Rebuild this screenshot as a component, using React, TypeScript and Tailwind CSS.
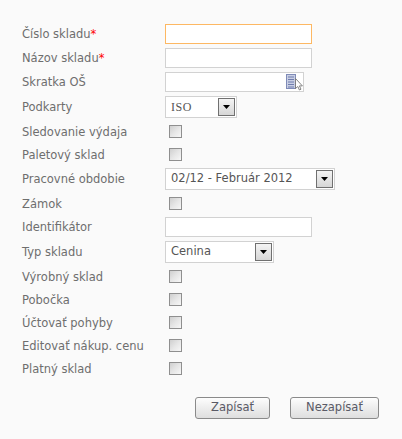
const font = "font-['DejaVu_Sans',sans-serif]";

function Label({ text, required }: { text: string; required?: boolean }) {
  return (
    <label className="w-[143px] shrink-0 text-[11.5px] leading-[14px] text-[#6e6e6e] whitespace-nowrap">
      {text}
      {required && <span className="text-[#f00]">*</span>}
    </label>
  );
}

function TextBox({ width, focused }: { width: string; focused?: boolean }) {
  return (
    <input
      type="text"
      className={`${width} h-5 bg-white border outline-none ${focused ? "border-[#fdb863]" : "border-[#d2d2d2]"}`}
    />
  );
}

function Check() {
  return (
    <span className="ml-1 block w-[13px] h-[13px] border border-[#8f8f8f] bg-gradient-to-br from-[#cfcfcf] via-[#e6e6e6] to-[#f7f7f7]" />
  );
}

function Select({ value, width, mono }: { value: string; width: string; mono?: boolean }) {
  return (
    <div className={`${width} h-[22px] bg-white border border-[#d2d2d2] flex items-center justify-between pl-[5px] pr-[1px]`}>
      <span className={`text-[11.5px] text-[#555] ${mono ? "font-['Liberation_Serif',serif] text-[12px] tracking-[0.5px]" : ""}`}>{value}</span>
      <span className="w-[17px] h-[18px] border border-[#707070] bg-gradient-to-b from-[#f4f4f4] to-[#d6d6d6] flex items-center justify-center">
        <svg width="7" height="4" viewBox="0 0 7 4">
          <path d="M0 0h7L3.5 4z" fill="#000" />
        </svg>
      </span>
    </div>
  );
}

function PickerIcon() {
  return (
    <svg className="absolute right-0 top-[2px]" width="18" height="17" viewBox="0 0 18 17">
      <rect x="0.5" y="0.5" width="9" height="14" fill="#c9cfe4" stroke="#7f8bb8" />
      <path d="M2 3h6M2 5.5h6M2 8h6M2 10.5h6M2 13h6" stroke="#6f7cae" />
      <path d="M9.5 4.5v10l2.3-2 1.6 3.5 1.6-.8-1.6-3.3h3z" fill="#fff" stroke="#777" strokeWidth="0.9" />
    </svg>
  );
}

function Row({ label, required, h, children }: { label: string; required?: boolean; h: string; children: React.ReactNode }) {
  return (
    <div className={`flex items-center ${h}`}>
      <Label text={label} required={required} />
      {children}
    </div>
  );
}

export default function App() {
  return (
    <div className={`w-[402px] h-[439px] bg-[#fafafa] pt-[22px] pl-[22px] ${font}`}>
      <Row label="Číslo skladu" required h="h-6"><TextBox width="w-[147px]" focused /></Row>
      <Row label="Názov skladu" required h="h-6"><TextBox width="w-[147px]" /></Row>
      <Row label="Skratka OŠ" h="h-6">
        <div className="relative flex w-[139px]">
          <TextBox width="w-[139px]" />
          <PickerIcon />
        </div>
      </Row>
      <Row label="Podkarty" h="h-[26px]"><Select value="ISO" width="w-[72px]" mono /></Row>
      <Row label="Sledovanie výdaja" h="h-[23px]"><Check /></Row>
      <Row label="Paletový sklad" h="h-[23px]"><Check /></Row>
      <Row label="Pracovné obdobie" h="h-[26px]"><Select value="02/12 - Február 2012" width="w-[170px]" /></Row>
      <Row label="Zámok" h="h-[23px]"><Check /></Row>
      <Row label="Identifikátor" h="h-[24px]"><TextBox width="w-[147px]" /></Row>
      <Row label="Typ skladu" h="h-[26px]"><Select value="Cenina" width="w-[109px]" /></Row>
      <Row label="Výrobný sklad" h="h-[23px]"><Check /></Row>
      <Row label="Pobočka" h="h-[23px]"><Check /></Row>
      <Row label="Účtovať pohyby" h="h-[23px]"><Check /></Row>
      <Row label="Editovať nákup. cenu" h="h-[23px]"><Check /></Row>
      <Row label="Platný sklad" h="h-[23px]"><Check /></Row>
      <div className="flex gap-5 ml-[173px] mt-[17px]">
        <button className="w-[75px] h-[22px] rounded-[3px] border border-[#8a8a8a] bg-gradient-to-b from-[#fdfdfd] to-[#dedede] text-[11.5px] text-[#5a5a66]">Zapísať</button>
        <button className="w-[89px] h-[22px] rounded-[3px] border border-[#8a8a8a] bg-gradient-to-b from-[#fdfdfd] to-[#dedede] text-[11.5px] text-[#5a5a66]">Nezapísať</button>
      </div>
    </div>
  );
}
